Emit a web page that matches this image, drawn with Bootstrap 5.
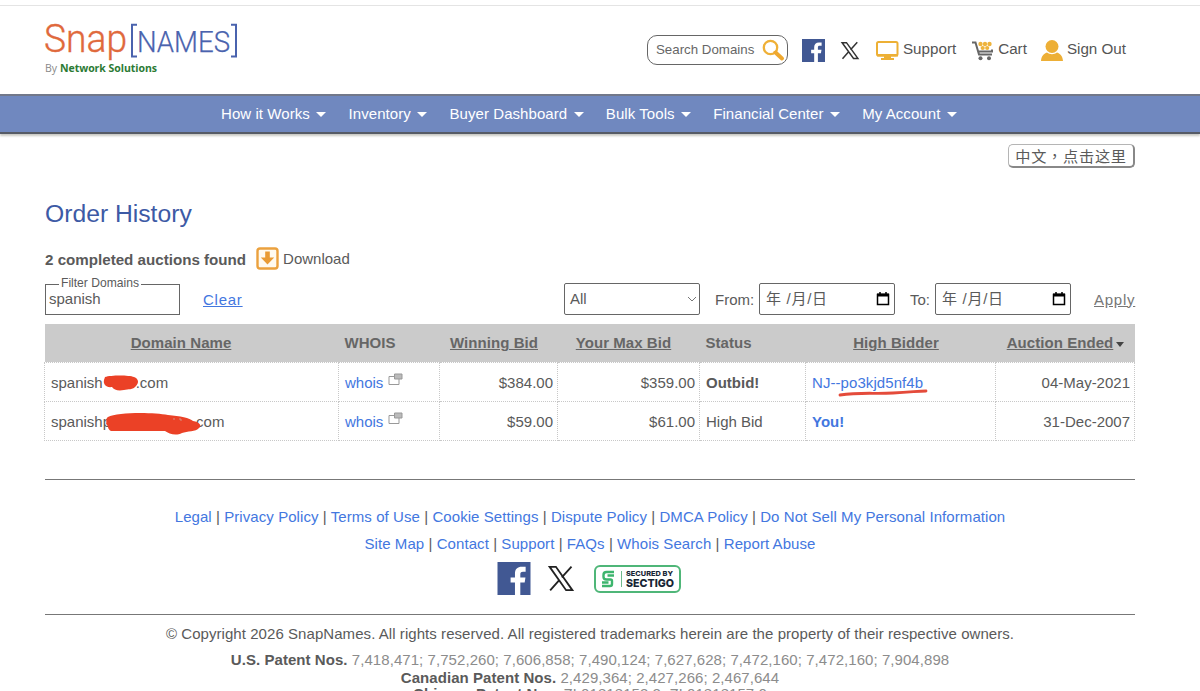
<!DOCTYPE html>
<html lang="en">
<head>
<meta charset="utf-8">
<meta name="viewport" content="width=device-width, initial-scale=1">
<title>SnapNames - Order History</title>
<link href="https://cdn.jsdelivr.net/npm/bootstrap@5.3.0/dist/css/bootstrap.min.css" rel="stylesheet">
<style>
html{overflow:hidden}
body{font-family:"Liberation Sans","Noto Sans CJK SC",sans-serif;font-size:15px;line-height:20px;color:#5a5a5a;height:691px;overflow:hidden;background:#fff}
svg{display:block;flex:none;overflow:visible}
a{color:#4377df;text-decoration:none}
.wrap{width:1090px;margin-left:45px}
.topline{height:6px;border-bottom:1px solid #e4e4e4}
.masthead{height:88px}
.logo{margin:12px 0 0 -1px}
.tools{margin-left:auto;margin-right:9px;height:30px;margin-top:29px;font-size:15.2px;color:#555}
.tools>span{position:relative;top:-1px}
.searchbox{width:141px;height:30px;border:1px solid #666;border-radius:10px;padding:0 3px 0 8px;font-size:13.3px;color:#666}
.mainnav{height:40px;background:#7088bf;border-top:2px solid #72788a;border-bottom:2px solid #565b66;box-shadow:0 2px 2px #c9c9c4;padding-left:221px;color:#fff;letter-spacing:.07px}
.mainnav .item{margin-right:22.1px;gap:6.5px}
.mainnav .caret{width:0;border:5px solid transparent;border-top:5px solid #fff;border-bottom:0;margin-top:1px}
.lang{margin:10px 0 0 auto;width:127px;height:24px;border:1px solid #b5b5b5;border-right:2px solid #888;border-bottom:2px solid #888;border-radius:5px;font-size:15.2px;font-family:"Liberation Sans","Noto Sans CJK TC",sans-serif;letter-spacing:.75px;white-space:nowrap;padding-top:2px}
h1{font-size:24.7px;line-height:30px;color:#3d5aa5;margin:31px 0 0}
.found{height:28px;margin-top:15px}
.filters{height:33px;margin-top:10px}
.filterbox{width:135px;height:31px;border:1px solid #666;position:relative;padding:3px 0 0 3px;margin-top:2px;align-self:flex-start}
.filterbox label{position:absolute;left:13px;top:-9px;background:#fff;padding:0 2px;font-size:12.1px;line-height:15px;white-space:nowrap}
.ctl{width:136px;height:32px;border:1px solid #666;border-radius:2px;padding:0 4px 0 6px}
.ls{letter-spacing:.75px;text-decoration:underline}
.orders{width:1090px;table-layout:fixed;border-collapse:collapse;margin:9px 0 0 -1px}
.orders th{height:38px;background:#cbcbcb;color:#666;padding:1px 5px 0 6px;white-space:nowrap;letter-spacing:.06px}
.orders td{height:39px;border:1px dotted #c8c8c8;padding:2px 4px 0 6px;white-space:nowrap;position:relative}
.orders .scribble{position:absolute}
.orders u{text-underline-offset:1px}
.rule{height:1px;background:#777}
.links{line-height:27px;letter-spacing:.07px}
.legal{letter-spacing:.06px}
.patents{line-height:18px;color:#8c8c8c}
.patents b{color:#5a5a5a}
</style>
</head>
<body>
<div class="topline"></div>
<header class="masthead wrap d-flex align-items-start">
  <svg class="logo" width="200" height="64" viewBox="44 18 200 64">
    <text x="44" y="52" font-family="Roboto" font-weight="300" font-size="39" fill="#e0693c" stroke="#e0693c" stroke-width=".35" textLength="83" lengthAdjust="spacingAndGlyphs">Snap</text>
    <path d="M137 24.800h-5v31.700h5M231 24.800h5v31.700h-5" fill="none" stroke="#4a63ae" stroke-width="2"/>
    <text x="137" y="52" font-family="Roboto" font-weight="300" font-size="29.500" fill="#4a63ae" stroke="#4a63ae" stroke-width=".25" textLength="93" lengthAdjust="spacingAndGlyphs">NAMES</text>
    <text x="45" y="72" font-family="Open Sans" font-size="10.500" fill="#888" textLength="12">By</text>
    <text x="60" y="72" font-family="Open Sans" font-weight="700" font-size="10.500" fill="#2c7a34" textLength="97">Network Solutions</text>
  </svg>
  <div class="tools d-flex align-items-center">
    <div class="searchbox d-flex align-items-center justify-content-between"><span>Search Domains</span>
      <svg width="22" height="22" viewBox="0 0 22 22"><circle cx="8.500" cy="8.500" r="6.700" fill="none" stroke="#efb037" stroke-width="2.300"/><path d="M13.500 13.500l6.500 6" stroke="#efa82f" stroke-width="4" stroke-linecap="round"/></svg></div>
    <svg style="margin-left:14px" width="23" height="23" viewBox="0 0 34 34"><path fill="#415893" d="M0 0h34v34H0z"/><path fill="#fff" d="M18 34V21h-4.500v-5H18v-4c0-4.800 2.800-7 7-7h4v5h-2.700c-2.300 0-2.800 1-2.800 2.800V16h5.300l-.8 5h-4.500v13z"/></svg>
    <svg style="margin-left:16px" width="18" height="19" viewBox="0 0 24 24"><path fill="none" stroke="#333" stroke-width="2" d="M1.500 1.500h5.800l15.200 21h-5.800zM21.700 1l-9 10M2 23l8.800-10"/></svg>
    <svg style="margin-left:17px" width="23" height="20" viewBox="0 0 23 20"><rect x="1" y="2" width="20.500" height="13.500" rx="1.500" fill="none" stroke="#edb035" stroke-width="2"/><path fill="#edb035" d="M1 14h21v2.500H1zM8 16h7v2h3v2H5v-2h3z"/></svg>
    <span style="margin-left:4px">Support</span>
    <svg style="margin-left:15px" width="23" height="21" viewBox="0 0 23 21"><path d="M1 2.500h3.500L8 14.500h13M7 11.500h14v-2" fill="none" stroke="#666" stroke-width="2"/><g fill="#666"><circle cx="9.500" cy="18.300" r="2"/><circle cx="18" cy="18.300" r="2"/></g><g fill="#eeb33b"><circle cx="9.500" cy="4" r="2.200"/><circle cx="14" cy="4" r="2.200"/><circle cx="18.500" cy="4" r="2.200"/><circle cx="11.700" cy="8" r="2.100"/><circle cx="16.200" cy="8" r="2.100"/></g></svg>
    <span style="margin-left:4px">Cart</span>
    <svg style="margin-left:14px" width="22" height="23" viewBox="0 0 22 23"><circle cx="11" cy="7.500" r="6.500" fill="#edaf36"/><path d="M0 22c.4-5 2.500-7 6-8.500 3 2.300 7 2.300 10 0 3.500 1.500 5.600 3.500 6 8.500z" fill="#edaf36"/></svg>
    <span style="margin-left:4px">Sign Out</span>
  </div>
</header>
<nav class="mainnav d-flex align-items-center">
  <div class="item d-flex align-items-center">How it Works <i class="caret"></i></div>
  <div class="item d-flex align-items-center">Inventory <i class="caret"></i></div>
  <div class="item d-flex align-items-center">Buyer Dashboard <i class="caret"></i></div>
  <div class="item d-flex align-items-center">Bulk Tools <i class="caret"></i></div>
  <div class="item d-flex align-items-center">Financial Center <i class="caret"></i></div>
  <div class="item d-flex align-items-center">My Account <i class="caret"></i></div>
</nav>
<main class="wrap">
  <div class="d-flex"><div class="lang d-flex align-items-center justify-content-center">中文，点击这里</div></div>
  <h1 class="fw-normal">Order History</h1>
  <div class="found d-flex align-items-center"><b style="font-size:15.150px;margin-top:4px">2 completed auctions found</b>
    <svg style="margin-left:10px" width="23" height="23" viewBox="0 0 23 23"><rect x="1.500" y="1.500" width="20" height="20" rx="2.500" fill="#fffaf0" stroke="#eba13e" stroke-width="2.400"/><path d="M9.200 4.500h4.600v6h4.400l-6.700 7-6.700-7h4.400z" fill="#e99b35"/></svg>
    <span style="margin:2px 0 0 4px">Download</span></div>
  <div class="filters d-flex align-items-center">
    <div class="filterbox"><label>Filter Domains</label><span class="d-block" style="padding-top:1px">spanish</span></div>
    <a class="ls" href="#" style="margin:2px 0 0 23px">Clear</a>
    <div class="ctl d-flex align-items-center justify-content-between ms-auto" style="padding-right:2px;padding-left:5px">All <svg width="10" height="6" viewBox="0 0 10 6"><path d="M1 1l4 4 4-4" fill="none" stroke="#777"/></svg></div>
    <span style="margin:2px 0 0 15px;width:44px">From:</span>
    <div class="ctl d-flex align-items-center justify-content-between"><span style="letter-spacing:.7px">年 /月/日</span><svg width="14" height="15" viewBox="0 0 14 15"><path d="M1.500 3.500h11v10h-11zM4 1v3M10 1v3M1 4h12" fill="none" stroke="#000" stroke-width="1.500"/><path d="M1 2.500h12v3H1z"/></svg></div>
    <span style="margin:2px 0 0 15px;width:25px">To:</span>
    <div class="ctl d-flex align-items-center justify-content-between"><span style="letter-spacing:.7px">年 /月/日</span><svg width="14" height="15" viewBox="0 0 14 15"><path d="M1.500 3.500h11v10h-11zM4 1v3M10 1v3M1 4h12" fill="none" stroke="#000" stroke-width="1.500"/><path d="M1 2.500h12v3H1z"/></svg></div>
    <span class="ls" style="margin:2px 0 0 23px;color:#777;width:41px">Apply</span>
  </div>
  <table class="orders">
    <colgroup><col style="width:294px"><col style="width:101px"><col style="width:118px"><col style="width:142px"><col style="width:106px"><col style="width:190px"><col style="width:139px"></colgroup>
    <thead><tr>
      <th class="text-center" style="padding-right:27px"><u>Domain Name</u></th><th>WHOIS</th><th class="text-center" style="padding-right:15px"><u>Winning Bid</u></th><th class="text-center" style="padding-right:16px"><u>Your Max Bid</u></th><th>Status</th><th class="text-center" style="padding-right:15px"><u>High Bidder</u></th>
      <th class="text-center"><u>Auction Ended</u><svg class="d-inline-block" style="margin-left:3px" width="8" height="7" viewBox="0 0 8 7"><path d="M0 1h8L4 6z" fill="#444"/></svg></th>
    </tr></thead>
    <tbody>
      <tr><td>spanish<span class="d-inline-block" style="width:33px"></span>.com
        <svg class="scribble" style="left:58px;top:12px" width="38" height="19" viewBox="0 0 38 19"><path d="M2 2C8 0 26 0 31 2c5 2 5 6 2 9-3 4-8 3-12 4-6 1-10 0-12-3C3 13 0 9 1 5z" fill="#eb4126"/></svg></td>
        <td><a href="#">whois</a> <svg class="d-inline-block" style="margin-top:-8px" width="15" height="13" viewBox="0 0 15 13"><path d="M1 3.500h10v8H1z" fill="#fff" stroke="#999"/><path d="M6.500 1h7.500v5H6.500z" fill="#bbb" stroke="#999"/></svg></td>
        <td class="text-end">$384.00</td><td class="text-end">$359.00</td><td><b>Outbid!</b></td>
        <td><a href="#" style="letter-spacing:.07px">NJ--po3kjd5nf4b</a><svg class="scribble" style="left:32px;top:25px" width="92" height="10" viewBox="0 0 92 10"><path d="M2 7C22 4 35 6 55 5S80 3 88 3" fill="none" stroke="#e44b3b" stroke-width="2.800" stroke-linecap="round"/></svg></td>
        <td class="text-end">04-May-2021</td></tr>
      <tr><td>spanishp<span class="d-inline-block" style="width:85px"></span>com
        <svg class="scribble" style="left:60px;top:10px" width="97" height="24" viewBox="0 0 97 24"><path d="M3 5C12 0 48 0 63 3c12 1 22 3 25 6 7 1 9 5 6 7-3 4-12 3-17 5-6 3-13 1-17-2H6C2 17 4 14 1 12c1-2-1-5 2-7z" fill="#eb4126"/><path d="M68 7h2m4 0h2m-1 1h2" stroke="#cfa198" stroke-width=".8"/></svg></td>
        <td><a href="#">whois</a> <svg class="d-inline-block" style="margin-top:-8px" width="15" height="13" viewBox="0 0 15 13"><path d="M1 3.500h10v8H1z" fill="#fff" stroke="#999"/><path d="M6.500 1h7.500v5H6.500z" fill="#bbb" stroke="#999"/></svg></td>
        <td class="text-end">$59.00</td><td class="text-end">$61.00</td><td>High Bid</td><td><a href="#"><b>You!</b></a></td><td class="text-end">31-Dec-2007</td></tr>
    </tbody>
  </table>
</main>
<footer class="wrap text-center" style="padding-top:38px">
  <div class="rule"></div>
  <div class="links" style="padding-top:23px">
    <div><a href="#">Legal</a> | <a href="#">Privacy Policy</a> | <a href="#">Terms of Use</a> | <a href="#">Cookie Settings</a> | <a href="#">Dispute Policy</a> | <a href="#">DMCA Policy</a> | <a href="#">Do Not Sell My Personal Information</a></div>
    <div><a href="#">Site Map</a> | <a href="#">Contact</a> | <a href="#">Support</a> | <a href="#">FAQs</a> | <a href="#">Whois Search</a> | <a href="#">Report Abuse</a></div>
  </div>
  <div class="d-flex align-items-center" style="height:34px;margin:5px 0 0 452px">
    <svg width="34" height="33" viewBox="0 0 34 34"><path fill="#415893" d="M0 0h34v34H0z"/><path fill="#fff" d="M18 34V21h-4.500v-5H18v-4c0-4.800 2.800-7 7-7h4v5h-2.700c-2.300 0-2.800 1-2.800 2.800V16h5.300l-.8 5h-4.500v13z"/></svg>
    <svg style="margin-left:17px" width="26" height="27" viewBox="0 0 24 24"><path fill="none" stroke="#222" stroke-width="1.700" d="M1.500 1.200h5.800l15.200 21.600h-5.800zM21.700 1l-9 10M2 23l8.800-10"/></svg>
    <svg style="margin-left:20px" width="87" height="28" viewBox="0 0 87 28"><rect x="1" y="1" width="85" height="26" rx="5" fill="#fff" stroke="#4fb678" stroke-width="2"/><path d="M20 7h-7.500Q9.500 7 9.500 10v2q0 2.500 3 2.500h4q1.500 0 1.500 1.500v3q0 2-2 2H8M20 10.500h-6.500M8 17.500h6.500" fill="none" stroke="#3db56d" stroke-width="2.400"/><path d="M27.500 6v16" stroke="#70b98c"/><g font-family="Inter" font-weight="800" fill="#162434"><text x="32" y="10.800" font-size="6.500" textLength="47" lengthAdjust="spacingAndGlyphs">SECURED BY</text><text x="32" y="22" font-size="11" textLength="48" lengthAdjust="spacingAndGlyphs">SECTIGO</text></g></svg>
  </div>
  <div class="rule" style="margin-top:18px"></div>
  <div class="legal" style="padding-top:9px">© Copyright 2026 SnapNames. All rights reserved. All registered trademarks herein are the property of their respective owners.</div>
  <div class="patents legal" style="margin-top:7px">
    <div><b>U.S. Patent Nos.</b> 7,418,471; 7,752,260; 7,606,858; 7,490,124; 7,627,628; 7,472,160; 7,472,160; 7,904,898</div>
    <div><b>Canadian Patent Nos.</b> 2,429,364; 2,427,266; 2,467,644</div>
    <div style="margin-top:-2px"><b>Chinese Patent Nos.</b> ZL01818153.2; ZL01818157.0</div>
  </div>
</footer>
<script src="https://cdn.jsdelivr.net/npm/bootstrap@5.3.0/dist/js/bootstrap.bundle.min.js"></script>
</body>
</html>
